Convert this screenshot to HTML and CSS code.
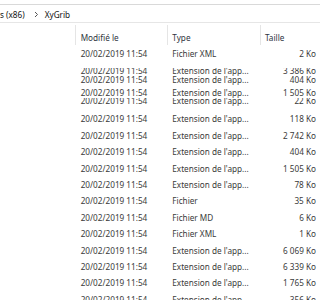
FILE: index.html
```html
<!DOCTYPE html>
<html lang="fr">
<head>
  <meta charset="UTF-8">
  <title>XyGrib</title>
  <link rel="stylesheet" href="styles.css">
</head>
<body>
  <div class="address">
    <span class="crumb">s (x86)</span>
    <svg class="chevron" width="5" height="7" viewBox="0 0 5 7"><path d="M1 1 L3.5 3.5 L1 6" fill="none" stroke="#555" stroke-width="1"/></svg>
    <span class="crumb">XyGrib</span>
  </div>

  <div class="header">
    <div class="cell name"></div>
    <div class="cell date">Modifié le</div>
    <div class="cell type">Type</div>
    <div class="cell size">Taille</div>
  </div>

  <div class="files">
    <div class="row">
      <div class="cell name"></div>
      <div class="cell date">20/02/2019 11:54</div>
      <div class="cell type">Fichier XML</div>
      <div class="cell size">2 Ko</div>
    </div>

    <!-- rows that were half redrawn in the capture -->
    <div class="glitch">
      <div class="clip clip-1">
        <div class="row">
          <div class="cell name"></div>
          <div class="cell date">20/02/2019 11:54</div>
          <div class="cell type">Extension de l'app...</div>
          <div class="cell size">3 386 Ko</div>
        </div>
      </div>
      <div class="clip clip-2">
        <div class="row">
          <div class="cell name"></div>
          <div class="cell date">20/02/2019 11:54</div>
          <div class="cell type">Extension de l'app...</div>
          <div class="cell size">404 Ko</div>
        </div>
      </div>
      <div class="clip clip-3">
        <div class="row">
          <div class="cell name"></div>
          <div class="cell date">20/02/2019 11:54</div>
          <div class="cell type">Extension de l'app...</div>
          <div class="cell size">1 505 Ko</div>
        </div>
      </div>
      <div class="clip clip-4">
        <div class="row">
          <div class="cell name"></div>
          <div class="cell date">20/02/2019 11:54</div>
          <div class="cell type">Extension de l'app...</div>
          <div class="cell size">22 Ko</div>
        </div>
      </div>
    </div>

    <div class="row">
      <div class="cell name"></div>
      <div class="cell date">20/02/2019 11:54</div>
      <div class="cell type">Extension de l'app...</div>
      <div class="cell size">118 Ko</div>
    </div>
    <div class="row">
      <div class="cell name"></div>
      <div class="cell date">20/02/2019 11:54</div>
      <div class="cell type">Extension de l'app...</div>
      <div class="cell size">2 742 Ko</div>
    </div>
    <div class="row">
      <div class="cell name"></div>
      <div class="cell date">20/02/2019 11:54</div>
      <div class="cell type">Extension de l'app...</div>
      <div class="cell size">404 Ko</div>
    </div>
    <div class="row">
      <div class="cell name"></div>
      <div class="cell date">20/02/2019 11:54</div>
      <div class="cell type">Extension de l'app...</div>
      <div class="cell size">1 505 Ko</div>
    </div>
    <div class="row">
      <div class="cell name"></div>
      <div class="cell date">20/02/2019 11:54</div>
      <div class="cell type">Extension de l'app...</div>
      <div class="cell size">78 Ko</div>
    </div>
    <div class="row">
      <div class="cell name"></div>
      <div class="cell date">20/02/2019 11:54</div>
      <div class="cell type">Fichier</div>
      <div class="cell size">35 Ko</div>
    </div>
    <div class="row">
      <div class="cell name"></div>
      <div class="cell date">20/02/2019 11:54</div>
      <div class="cell type">Fichier MD</div>
      <div class="cell size">6 Ko</div>
    </div>
    <div class="row">
      <div class="cell name"></div>
      <div class="cell date">20/02/2019 11:54</div>
      <div class="cell type">Fichier XML</div>
      <div class="cell size">1 Ko</div>
    </div>
    <div class="row">
      <div class="cell name"></div>
      <div class="cell date">20/02/2019 11:54</div>
      <div class="cell type">Extension de l'app...</div>
      <div class="cell size">6 069 Ko</div>
    </div>
    <div class="row">
      <div class="cell name"></div>
      <div class="cell date">20/02/2019 11:54</div>
      <div class="cell type">Extension de l'app...</div>
      <div class="cell size">6 339 Ko</div>
    </div>
    <div class="row">
      <div class="cell name"></div>
      <div class="cell date">20/02/2019 11:54</div>
      <div class="cell type">Extension de l'app...</div>
      <div class="cell size">1 765 Ko</div>
    </div>
    <div class="row">
      <div class="cell name"></div>
      <div class="cell date">20/02/2019 11:54</div>
      <div class="cell type">Extension de l'app...</div>
      <div class="cell size">356 Ko</div>
    </div>
  </div>
</body>
</html>
```

FILE: styles.css
```css
body {
  margin: 0;
  width: 320px;
  height: 300px;
  overflow: hidden;
  background-color: #ffffff;
  font-family: "Noto Sans", "Open Sans", sans-serif;
  font-size: 8.2px;
  color: #3a3a3a;
}

/* address bar with the breadcrumb */
.address {
  margin-top: 4px;
  height: 16px;
  border-top: 1px solid #d9d9d9;
  border-bottom: 1px solid #e6e6e6;
  display: flex;
  align-items: center;
  padding-top: 1px;
  box-sizing: content-box;
  color: #111111;
}

.crumb {
  white-space: nowrap;
}

.chevron {
  margin: 0 6px 0 9px;
}

/* column headers */
.header {
  margin-top: 2px;
  height: 20.4px;
  display: flex;
}

.header .cell {
  padding-top: 7px;
  line-height: 12px;
  color: #2e3440;
}

.header .date,
.header .type,
.header .size {
  border-left: 1px solid #e5e5e5;
}

.header .date {
  padding-left: 4.7px;
  width: 86.3px;
}

.header .type {
  padding-left: 4.3px;
  width: 87.7px;
}

.header .size {
  padding-left: 4px;
  text-align: left;
}

/* file rows */
.files {
  margin-top: 0.5px;
}

.cell {
  white-space: nowrap;
  box-sizing: content-box;
}

.name {
  width: 75px;
}

.row {
  display: flex;
  height: 16.4px;
  line-height: 16.4px;
}

.row .date {
  width: 86.3px;
  padding-left: 5.7px;
}

.row .type {
  width: 87.7px;
  padding-left: 5.3px;
}

.row .size {
  width: 56px;
  text-align: right;
}

/* half-redrawn rows */
.glitch {
  display: flow-root;
  height: 49.2px;
}

.clip {
  display: flow-root;
  overflow: hidden;
}

.clip-1 {
  margin-top: 6px;
  height: 8px;
}

.clip-1 .row {
  margin-top: -5px;
}

.clip-2 {
  height: 9.4px;
  overflow: visible;
}

.clip-2 .row {
  margin-top: -3.8px;
}

.clip-3 {
  height: 12.3px;
}

.clip-3 .row {
  margin-top: -0.8px;
}

.clip-4 {
  height: 13.5px;
}

.clip-4 .row {
  margin-top: -5.4px;
}
```
